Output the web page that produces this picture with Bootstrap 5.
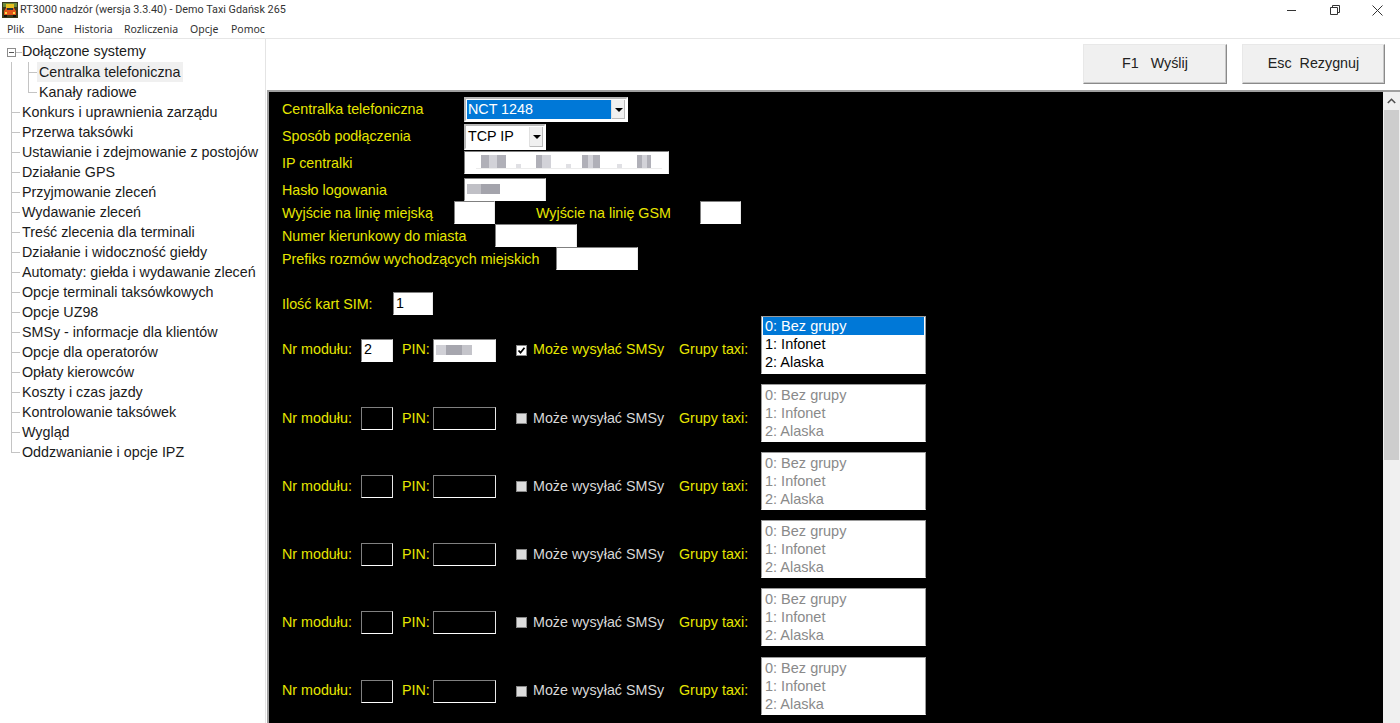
<!DOCTYPE html>
<html lang="pl">
<head>
<meta charset="utf-8">
<title>RT3000 nadzór</title>
<link href="https://cdn.jsdelivr.net/npm/bootstrap@5.3.0/dist/css/bootstrap.min.css" rel="stylesheet">
<style>
html,body{height:100%;overflow:hidden}
body{font-family:"Liberation Sans",Arial,sans-serif;font-size:14px;color:#1a1a1a;background:#fff}
.win-title{height:20px;font-family:Roboto,"Noto Sans",sans-serif;font-size:10.8px;color:#333;padding-left:2px;flex:none}
.win-title .ttl{white-space:nowrap;line-height:20px;margin-left:2px}
.win-ctrls{padding-right:1px}
.win-ctrls span{display:flex;width:43px;justify-content:center}
.win-menu{height:18px;width:266px;font-family:"Noto Sans","Open Sans",sans-serif;font-size:10.5px;color:#333;overflow:hidden;white-space:nowrap;padding-left:7px;line-height:18px;flex:none}
.win-menu span{display:inline-block}
.m1{width:30px}.m2{width:37px}.m3{width:50px}.m4{width:66px}.m5{width:41px}
.work{height:685px;border-top:1px solid #e6e6e6}
.tree{width:266px;flex:none;border-right:1px solid #e4e4e4;padding-top:3px;font-size:14.3px;white-space:nowrap;margin-right:1px}
.tree ul{list-style:none;margin:0;padding:0}
.root-row{height:20px;padding-left:7px}
.pm{width:9px;height:9px;border:1px solid #8c8c8c;flex:none;background:linear-gradient(#555,#555) center/5px 1px no-repeat}
.stub{width:6px;height:1px;background:#bdbdbd;flex:none}
.tree .lvl1{margin-left:11px}
.lvl1>li{background:linear-gradient(#c4c4c4,#c4c4c4) 0 0/1px 100% no-repeat,linear-gradient(#c4c4c4,#c4c4c4) 0 10px/9px 1px no-repeat}
.lvl1>li:last-child{background:linear-gradient(#c4c4c4,#c4c4c4) 0 0/1px 10px no-repeat,linear-gradient(#c4c4c4,#c4c4c4) 0 10px/9px 1px no-repeat}
.lvl1>li.hasub{background:linear-gradient(#c4c4c4,#c4c4c4) 0 0/1px 100% no-repeat}
.leaf{height:20px;line-height:20px;padding-left:11px}
.tree .lvl2{margin-left:17px}
.lvl2>li{background:linear-gradient(#c4c4c4,#c4c4c4) 0 0/1px 100% no-repeat,linear-gradient(#c4c4c4,#c4c4c4) 0 10px/9px 1px no-repeat}
.lvl2>li:last-child{background:linear-gradient(#c4c4c4,#c4c4c4) 0 0/1px 10px no-repeat,linear-gradient(#c4c4c4,#c4c4c4) 0 10px/9px 1px no-repeat}
.lvl2 .leaf{padding-left:9px}
.lvl2 .leaf span{padding:0 3px 0 2px;display:inline-block}
.lvl2 .leaf .sel-leaf{background:#f0f0f0}
.mainpane{min-width:0}
.tools{height:53px;padding:5px 15px 0 0;gap:15px;border-bottom:2px solid #a0a0a0;flex:none}
.tools .btn{height:40px;width:144px;padding:0;border-radius:0;background:#f0f0f0;color:#222;font-size:14.3px;border:1px solid;border-color:#e8e8e8 #8a8a8a #8a8a8a #e8e8e8;box-shadow:inset -1px -1px 0 #c8c8c8}
.tools .btn+.btn{width:143px}
.panelwrap{min-height:0;border-left:2px solid #a0a0a0}
.panel{background:#000;color:#e6e600;padding:5px 0 0 13px;font-size:14.3px;overflow:hidden;white-space:nowrap}
.frow{height:23px}
.frow>span,.simrow>span{padding-top:2px}
.gap-after-a{margin-bottom:2px}.gap-after-b{margin-bottom:1px}.gap-after-c{margin-bottom:4px}
.lb182{width:182px}
.lb172{width:172px}.gap41{width:41px}.lb164{width:164px}.lb213{width:213px}.lb274{width:274px}
.fld{height:23px;padding:0 2px;border:1px solid;border-color:#808080 #e8e8e8 #fff #808080;border-radius:0;background:#fff;color:#000;font-size:14.3px;display:flex;align-items:center;overflow:hidden}
.w41{width:41px;flex:none}.w82{width:82px;flex:none}.w205{width:205px;flex:none}.w40{width:40px;flex:none}
.w32{width:32px;flex:none}.w63{width:63px;flex:none}
.fld.off{background:#000}
.mos{filter:blur(.7px);flex:none}
.combo{height:25px;border:2px solid;border-color:#b8b8b8 #fff #fff #b8b8b8;background:#fff;padding:1px;flex:none;color:#000}
.combo .val{flex:1;padding-left:1px;line-height:19px}
.combo .val.on{background:#0078d7;color:#fff}
.combo .arrow{width:14px;background:#f0f0f0;display:flex;align-items:center;justify-content:center;border-left:1px solid #e0e0e0;box-shadow:inset -1px -1px 0 #bbb}
.combo .arrow i{display:block;width:0;height:0;border:4px solid transparent;border-top:4px solid #000;border-bottom:0}
.c164{width:164px}.c82{width:82px;height:26px}
.simrow{margin-top:21.6px;height:24px}
.simlb{width:111px}
.modrow{height:58px;margin-bottom:10.2px;align-items:flex-start}
.modf{margin-top:23px;height:23px}
.l79{width:79px}.g9{width:9px}.l31{width:31px}.g20{width:20px}.l146{width:152px;padding-left:6px}.l82{width:82px}
.chk.form-check-input{width:11px;height:11px;margin:0;border-radius:0;flex:none;border:1px solid #888;background-color:#fff;opacity:1}
.chk.form-check-input:checked{background-color:#fff;border-color:#888;background-size:9px 9px;background-image:url("data:image/svg+xml,%3Csvg xmlns='http://www.w3.org/2000/svg' viewBox='0 0 9 9'%3E%3Cpath d='M1.5 4.5l2 2.2 4-5' fill='none' stroke='%23000' stroke-width='1.8'/%3E%3C/svg%3E")}
.chk.form-check-input:disabled{background-color:#dcdcdc;opacity:1}
.off-lb{color:#d8d8d8}
.lbox{width:165px;height:58px;border:1px solid;border-color:#9a9a9a #9a9a9a #fff #9a9a9a;border-radius:0;background:#fff;padding:1px;flex:none;font-size:14.5px}
.modrow:first-child .lbox{padding-top:0}
.lbox .list-group-item{height:18px;line-height:18px;padding:0 0 0 2px;border:0;border-radius:0;background:transparent;color:#000}
.lbox .list-group-item.active{background:#0078d7;color:#fff}
.lbox .list-group-item.disabled{color:#8a8a8a}
.sbar{width:17px;flex:none;background:#f0f0f0}
.sb-up{height:18px}
.sb-th{height:350px;background:#cdcdcd;margin:0 1px}
</style>
</head>
<body class="d-flex flex-column">
<div class="win-title d-flex align-items-center justify-content-between">
  <div class="d-flex align-items-center">
    <svg width="16" height="16" viewBox="0 0 16 16"><rect width="16" height="16" fill="#3a3a1c"/><rect x="1" y="1" width="14" height="4" fill="#6b8a3a"/><rect x="4" y="2" width="8" height="4" fill="#e8c020"/><path d="M4 6h8l2 3v4H2V9z" fill="#e2571c"/><rect x="5" y="6" width="6" height="2" fill="#27303a"/><rect x="3" y="10" width="2" height="2" fill="#ffd84a"/><rect x="11" y="10" width="2" height="2" fill="#ffd84a"/><rect x="2" y="13" width="3" height="2" fill="#111"/><rect x="11" y="13" width="3" height="2" fill="#111"/></svg>
    <span class="ttl">RT3000 nadzór (wersja 3.3.40) - Demo Taxi Gdańsk 265</span>
  </div>
  <div class="win-ctrls d-flex align-items-center">
    <span><svg width="10" height="10" viewBox="0 0 10 10"><path d="M0 5.5h9" stroke="#333"/></svg></span>
    <span><svg width="10" height="10" viewBox="0 0 10 10"><path d="M.5 2.5h7v7h-7zM2.5 2.5v-2h7v7h-2" fill="none" stroke="#333"/></svg></span>
    <span><svg width="11" height="11" viewBox="0 0 11 11"><path d="M.5.5l10 10M10.5.5l-10 10" stroke="#333"/></svg></span>
  </div>
</div>
<div class="win-menu"><span class="m1">Plik</span><span class="m2">Dane</span><span class="m3">Historia</span><span class="m4">Rozliczenia</span><span class="m5">Opcje</span><span>Pomoc</span></div>
<div class="work d-flex">
  <nav class="tree">
    <div class="root-row d-flex align-items-center"><span class="pm"></span><span class="stub"></span><span>Dołączone systemy</span></div>
    <ul class="lvl1">
      <li class="hasub"><ul class="lvl2">
        <li class="leaf"><span class="sel-leaf">Centralka telefoniczna</span></li>
        <li class="leaf"><span>Kanały radiowe</span></li>
      </ul></li>
      <li class="leaf">Konkurs i uprawnienia zarządu</li>
      <li class="leaf">Przerwa taksówki</li>
      <li class="leaf">Ustawianie i zdejmowanie z postojów</li>
      <li class="leaf">Działanie GPS</li>
      <li class="leaf">Przyjmowanie zleceń</li>
      <li class="leaf">Wydawanie zleceń</li>
      <li class="leaf">Treść zlecenia dla terminali</li>
      <li class="leaf">Działanie i widoczność giełdy</li>
      <li class="leaf">Automaty: giełda i wydawanie zleceń</li>
      <li class="leaf">Opcje terminali taksówkowych</li>
      <li class="leaf">Opcje UZ98</li>
      <li class="leaf">SMSy - informacje dla klientów</li>
      <li class="leaf">Opcje dla operatorów</li>
      <li class="leaf">Opłaty kierowców</li>
      <li class="leaf">Koszty i czas jazdy</li>
      <li class="leaf">Kontrolowanie taksówek</li>
      <li class="leaf">Wygląd</li>
      <li class="leaf">Oddzwanianie i opcje IPZ</li>
    </ul>
  </nav>
  <main class="mainpane flex-grow-1 d-flex flex-column">
    <div class="tools d-flex justify-content-end">
      <button type="button" class="btn">F1 &nbsp; Wyślij</button>
      <button type="button" class="btn">Esc&nbsp; Rezygnuj</button>
    </div>
    <div class="panelwrap flex-grow-1 d-flex">
      <div class="panel flex-grow-1">
        <div class="d-flex align-items-center gap-after-a"><span class="lb182">Centralka telefoniczna</span><div class="combo c164 d-flex"><span class="val on">NCT 1248</span><span class="arrow"><i></i></span></div></div>
        <div class="d-flex align-items-center gap-after-b"><span class="lb182">Sposób podłączenia</span><div class="combo c82 d-flex"><span class="val">TCP IP</span><span class="arrow"><i></i></span></div></div>
        <div class="d-flex align-items-center frow gap-after-c"><span class="lb182">IP centralki</span><div class="fld w205"><svg class="mos" width="197" height="19" viewBox="0 0 197 19"><g fill="#b0b0b8"><rect x="14" y="2" width="8" height="13"/><rect x="30" y="2" width="9" height="13"/><rect x="69" y="2" width="6" height="13"/><rect x="115" y="2" width="6" height="13"/><rect x="126" y="2" width="7" height="13"/><rect x="170" y="2" width="5" height="13"/><rect x="180" y="2" width="4" height="13"/></g><g fill="#d2d2d8"><rect x="22" y="2" width="8" height="13"/><rect x="75" y="2" width="9" height="13"/><rect x="121" y="2" width="5" height="13"/><rect x="175" y="2" width="5" height="13"/></g><g fill="#e0e0e4"><rect x="49" y="11" width="5" height="4"/><rect x="99" y="11" width="5" height="4"/><rect x="150" y="11" width="5" height="4"/></g><rect x="9" y="15" width="186" height="1" fill="#ececec"/></svg></div></div>
        <div class="d-flex align-items-center frow"><span class="lb182">Hasło logowania</span><div class="fld w82"><svg class="mos" width="40" height="15" viewBox="0 0 40 15"><rect x="0" y="2" width="14" height="10" fill="#c0c0c6"/><rect x="14" y="2" width="19" height="10" fill="#a4a4ac"/></svg></div></div>
        <div class="d-flex align-items-center frow"><span class="lb172">Wyjście na linię miejską</span><div class="fld w41"></div><span class="gap41"></span><span class="lb164">Wyjście na linię GSM</span><div class="fld w41"></div></div>
        <div class="d-flex align-items-center frow"><span class="lb213">Numer kierunkowy do miasta</span><div class="fld w82"></div></div>
        <div class="d-flex align-items-center frow"><span class="lb274">Prefiks rozmów wychodzących miejskich</span><div class="fld w82"></div></div>
        <div class="d-flex align-items-center simrow"><span class="simlb">Ilość kart SIM:</span><div class="fld w40">1</div></div>
        <div>
          <div class="d-flex modrow"><div class="d-flex align-items-center modf"><span class="l79">Nr modułu:</span><div class="fld w32">2</div><span class="g9"></span><span class="l31">PIN:</span><div class="fld w63"><svg class="mos" width="40" height="15" viewBox="0 0 40 15"><rect x="0" y="2" width="10" height="10" fill="#d0d0d6"/><rect x="10" y="2" width="16" height="10" fill="#a6a6ae"/><rect x="26" y="2" width="10" height="10" fill="#c4c4ca"/></svg></div><span class="g20"></span><input class="form-check-input chk" type="checkbox" checked aria-label="Może wysyłać SMSy"><span class="l146">Może wysyłać SMSy</span><span class="l82">Grupy taxi:</span></div><ul class="list-group lbox"><li class="list-group-item active">0: Bez grupy</li><li class="list-group-item">1: Infonet</li><li class="list-group-item">2: Alaska</li></ul></div>
          <div class="d-flex modrow"><div class="d-flex align-items-center modf"><span class="l79">Nr modułu:</span><div class="fld w32 off"></div><span class="g9"></span><span class="l31">PIN:</span><div class="fld w63 off"></div><span class="g20"></span><input class="form-check-input chk" type="checkbox" disabled aria-label="Może wysyłać SMSy"><span class="l146 off-lb">Może wysyłać SMSy</span><span class="l82">Grupy taxi:</span></div><ul class="list-group lbox"><li class="list-group-item disabled">0: Bez grupy</li><li class="list-group-item disabled">1: Infonet</li><li class="list-group-item disabled">2: Alaska</li></ul></div>
          <div class="d-flex modrow"><div class="d-flex align-items-center modf"><span class="l79">Nr modułu:</span><div class="fld w32 off"></div><span class="g9"></span><span class="l31">PIN:</span><div class="fld w63 off"></div><span class="g20"></span><input class="form-check-input chk" type="checkbox" disabled aria-label="Może wysyłać SMSy"><span class="l146 off-lb">Może wysyłać SMSy</span><span class="l82">Grupy taxi:</span></div><ul class="list-group lbox"><li class="list-group-item disabled">0: Bez grupy</li><li class="list-group-item disabled">1: Infonet</li><li class="list-group-item disabled">2: Alaska</li></ul></div>
          <div class="d-flex modrow"><div class="d-flex align-items-center modf"><span class="l79">Nr modułu:</span><div class="fld w32 off"></div><span class="g9"></span><span class="l31">PIN:</span><div class="fld w63 off"></div><span class="g20"></span><input class="form-check-input chk" type="checkbox" disabled aria-label="Może wysyłać SMSy"><span class="l146 off-lb">Może wysyłać SMSy</span><span class="l82">Grupy taxi:</span></div><ul class="list-group lbox"><li class="list-group-item disabled">0: Bez grupy</li><li class="list-group-item disabled">1: Infonet</li><li class="list-group-item disabled">2: Alaska</li></ul></div>
          <div class="d-flex modrow"><div class="d-flex align-items-center modf"><span class="l79">Nr modułu:</span><div class="fld w32 off"></div><span class="g9"></span><span class="l31">PIN:</span><div class="fld w63 off"></div><span class="g20"></span><input class="form-check-input chk" type="checkbox" disabled aria-label="Może wysyłać SMSy"><span class="l146 off-lb">Może wysyłać SMSy</span><span class="l82">Grupy taxi:</span></div><ul class="list-group lbox"><li class="list-group-item disabled">0: Bez grupy</li><li class="list-group-item disabled">1: Infonet</li><li class="list-group-item disabled">2: Alaska</li></ul></div>
          <div class="d-flex modrow"><div class="d-flex align-items-center modf"><span class="l79">Nr modułu:</span><div class="fld w32 off"></div><span class="g9"></span><span class="l31">PIN:</span><div class="fld w63 off"></div><span class="g20"></span><input class="form-check-input chk" type="checkbox" disabled aria-label="Może wysyłać SMSy"><span class="l146 off-lb">Może wysyłać SMSy</span><span class="l82">Grupy taxi:</span></div><ul class="list-group lbox"><li class="list-group-item disabled">0: Bez grupy</li><li class="list-group-item disabled">1: Infonet</li><li class="list-group-item disabled">2: Alaska</li></ul></div>
        </div>
      </div>
      <div class="sbar">
        <div class="sb-up d-flex align-items-center justify-content-center"><svg width="9" height="6" viewBox="0 0 9 6"><path d="M.8 5l3.7-3.7L8.2 5" fill="none" stroke="#505050" stroke-width="1.6"/></svg></div>
        <div class="sb-th"></div>
      </div>
    </div>
  </main>
</div>
<script src="https://cdn.jsdelivr.net/npm/bootstrap@5.3.0/dist/js/bootstrap.bundle.min.js"></script>
</body>
</html>
